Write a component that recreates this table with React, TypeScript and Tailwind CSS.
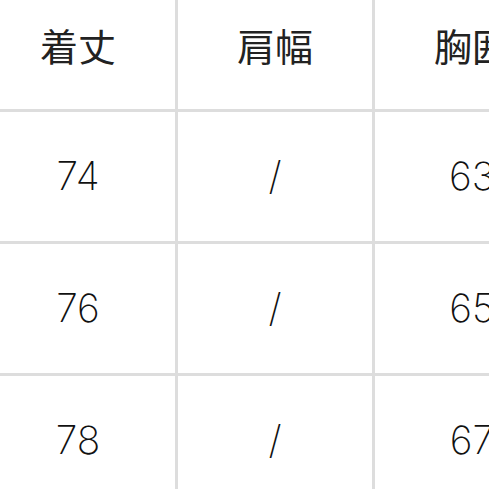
const headers = ["着丈", "肩幅", "胸囲"];
const rows = [
  ["74", "/", "63"],
  ["76", "/", "65"],
  ["78", "/", "67"],
];

function Cell({ children, head }: { children: React.ReactNode; head?: boolean }) {
  return (
    <div
      className={
        head
          ? "flex h-[129px] items-center justify-center bg-white font-['Noto_Sans_CJK_JP',sans-serif] text-[38px] font-normal text-[#222]"
          : "flex h-[129px] items-center justify-center bg-white font-['Inter','Noto_Sans',sans-serif] text-[39px] font-extralight text-[#111]"
      }
    >
      {children}
    </div>
  );
}

export default function App() {
  return (
    <div className="h-[489px] w-[489px] overflow-hidden bg-white">
      <div className="ml-[-19px] mt-[-20px] grid w-max grid-cols-[194px_194px_194px] gap-[3px] bg-[#dddddd]">
        {headers.map((h) => (
          <Cell key={h} head>
            {h}
          </Cell>
        ))}
        {rows.map((r, i) => r.map((v, j) => <Cell key={`${i}-${j}`}>{v}</Cell>))}
      </div>
    </div>
  );
}
